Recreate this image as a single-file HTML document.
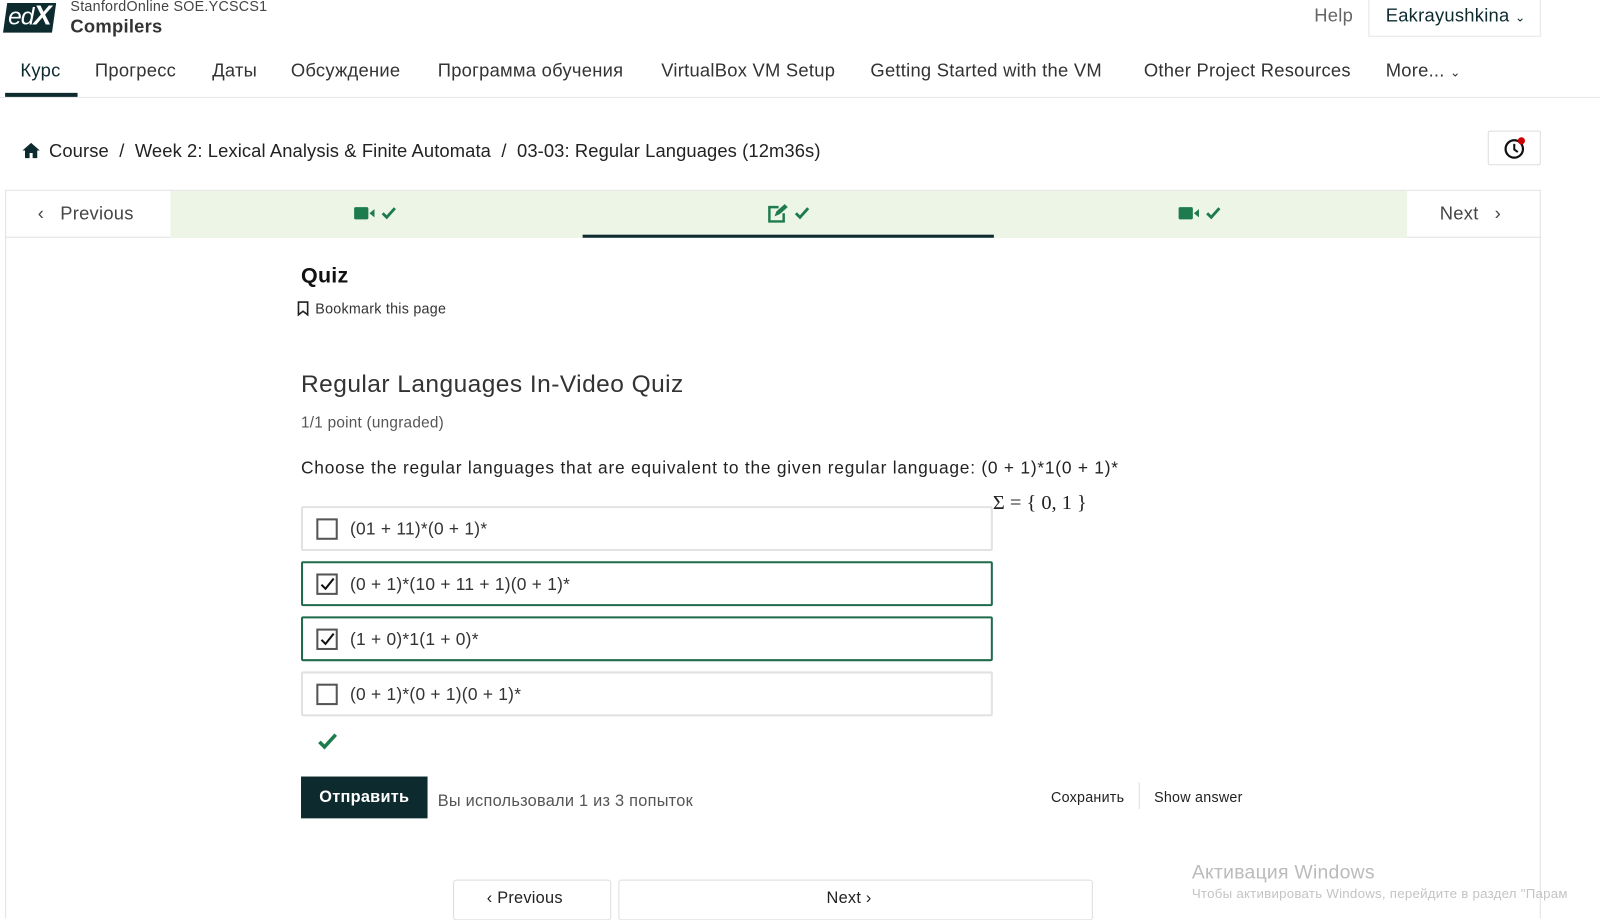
<!DOCTYPE html>
<html><head><meta charset="utf-8"><style>
*{box-sizing:border-box;margin:0;padding:0}
html,body{width:1600px;height:900px;overflow:hidden;background:#fff}
#w{position:absolute;left:0;top:0;width:1568px;height:882px;transform:scale(1.0204);transform-origin:0 0;font-family:"Liberation Sans",sans-serif;color:#222;letter-spacing:0.25px}
.a{position:absolute;white-space:nowrap}
.nav{font-size:18px;color:#333;top:59px}
.opt{position:absolute;left:295px;width:678px;height:44px;border:2px solid #e2e2e2;border-radius:2px}
.opt.s{border-color:#1f6b4c}
.cb{position:absolute;left:13px;top:10px;width:21px;height:21px;border:2px solid #555;background:#fff}
.opt span{position:absolute;left:46px;top:11px;font-size:17px;color:#333}
.tab{position:absolute;top:187px;height:46px;background:#edf5e6}
</style></head><body><div id="w">
<div class="a" style="left:5px;top:3px;width:48px;height:29px;background:#0d2b2f;transform:skewX(-8deg)"></div>
<div class="a" style="left:8px;top:0px;font-size:24px;font-style:italic;color:#fff;letter-spacing:-1px">ed<b style="font-size:27px">X</b></div>
<div class="a" style="left:69px;top:-2px;font-size:14px;color:#444">StanfordOnline SOE.YCSCS1</div>
<div class="a" style="left:69px;top:16px;font-size:18px;font-weight:bold;color:#333">Compilers</div>
<div class="a" style="left:1288px;top:5px;font-size:18px;color:#666">Help</div>
<div class="a" style="left:1341px;top:-1px;width:169px;height:37px;border:1px solid #e5e5e5"></div>
<div class="a" style="left:1358px;top:5px;font-size:18px;color:#0d2b2f">Eakrayushkina <span style="font-size:12px">⌄</span></div>
<div class="a nav" style="left:20px;color:#0d2b2f">Курс</div>
<div class="a" style="left:5px;top:91px;width:71px;height:4px;background:#0d2b2f"></div>
<div class="a nav" style="left:93px">Прогресс</div>
<div class="a nav" style="left:208px">Даты</div>
<div class="a nav" style="left:285px">Обсуждение</div>
<div class="a nav" style="left:429px">Программа обучения</div>
<div class="a nav" style="left:648px">VirtualBox VM Setup</div>
<div class="a nav" style="left:853px">Getting Started with the VM</div>
<div class="a nav" style="left:1121px">Other Project Resources</div>
<div class="a nav" style="left:1358px">More... <span style="font-size:12px">⌄</span></div>
<div class="a" style="left:0;top:95px;width:1600px;height:1px;background:#e8e8e8"></div>
<svg class="a" style="left:21px;top:139px" width="19" height="17" viewBox="0 0 19 17"><path d="M9.5 1L1 8.5h2.5V16h4.5v-5h3v5h4.5V8.5H18z" fill="#0d2b2f"/></svg>
<div class="a" style="left:48px;top:138px;font-size:18px;color:#222;letter-spacing:0.1px">Course &nbsp;/ &nbsp;Week 2: Lexical Analysis &amp; Finite Automata &nbsp;/ &nbsp;03-03: Regular Languages (12m36s)</div>
<div class="a" style="left:1458px;top:128px;width:52px;height:34px;border:1px solid #ddd;border-radius:2px"></div>
<svg class="a" style="left:1472px;top:133px" width="26" height="26" viewBox="0 0 26 26"><circle cx="12" cy="13" r="8.5" fill="none" stroke="#111" stroke-width="2.2"/><path d="M12 8v5.5l3.5 2.5" fill="none" stroke="#111" stroke-width="2"/><circle cx="19" cy="5" r="3.5" fill="#c00"/></svg>
<div class="a" style="left:5px;top:186px;width:1505px;height:714px;border:1px solid #e2e2e2;border-bottom:none"></div>
<div class="a" style="left:5px;top:232px;width:1505px;height:1px;background:#e2e2e2"></div>
<div class="tab" style="left:167px;width:404px"></div>
<div class="tab" style="left:571px;width:403px"></div>
<div class="tab" style="left:974px;width:405px"></div>
<div class="a" style="left:571px;top:230px;width:403px;height:3px;background:#0d2b2f"></div>
<div class="a" style="left:37px;top:199px;font-size:18px;color:#454545">‹ &nbsp;&nbsp;Previous</div>
<div class="a" style="left:1411px;top:199px;font-size:18px;color:#454545">Next &nbsp;&nbsp;›</div>
<svg class="a" style="left:347px;top:201px" width="46" height="16" viewBox="0 0 46 16"><rect x="0" y="2" width="14" height="12" rx="1.5" fill="#1e7b4e"/><path d="M15 8l5-4v8z" fill="#1e7b4e"/><path d="M28 8l4 4 8-9" fill="none" stroke="#1e7b4e" stroke-width="2.8"/></svg>
<svg class="a" style="left:751px;top:199px" width="46" height="20" viewBox="0 0 46 20"><path d="M12 4H3v14h14v-8" fill="none" stroke="#1e7b4e" stroke-width="2.4"/><path d="M8 13l2-5 8-7 3 3-8 7z" fill="#1e7b4e"/><path d="M29 10l4 4 8-9" fill="none" stroke="#1e7b4e" stroke-width="2.8"/></svg>
<svg class="a" style="left:1155px;top:201px" width="46" height="16" viewBox="0 0 46 16"><rect x="0" y="2" width="14" height="12" rx="1.5" fill="#1e7b4e"/><path d="M15 8l5-4v8z" fill="#1e7b4e"/><path d="M28 8l4 4 8-9" fill="none" stroke="#1e7b4e" stroke-width="2.8"/></svg>
<div class="a" style="left:295px;top:259px;font-size:21px;font-weight:bold;color:#111">Quiz</div>
<svg class="a" style="left:291px;top:295px" width="12" height="15" viewBox="0 0 12 15"><path d="M1.5 1h9v12.5L6 10l-4.5 3.5z" fill="none" stroke="#222" stroke-width="1.6"/></svg>
<div class="a" style="left:309px;top:294px;font-size:14px;color:#333">Bookmark this page</div>
<div class="a" style="left:295px;top:363px;font-size:24px;color:#333;letter-spacing:0.45px">Regular Languages In-Video Quiz</div>
<div class="a" style="left:295px;top:406px;font-size:15px;color:#555">1/1 point (ungraded)</div>
<div class="a" style="left:295px;top:449px;font-size:17px;color:#222;letter-spacing:0.75px">Choose the regular languages that are equivalent to the given regular language: (0 + 1)*1(0 + 1)*</div>
<div class="a" style="left:973px;top:482px;font-size:20px;font-family:'Liberation Serif',serif;color:#222;letter-spacing:0">Σ = { 0, 1 }</div>
<div class="opt" style="top:496px"><div class="cb"></div><span>(01 + 11)*(0 + 1)*</span></div>
<div class="opt s" style="top:550px"><div class="cb"><svg width="17" height="17" viewBox="0 0 17 17" style="position:absolute;left:0;top:0"><path d="M3 9l4 4 8-10" fill="none" stroke="#111" stroke-width="2"/></svg></div><span>(0 + 1)*(10 + 11 + 1)(0 + 1)*</span></div>
<div class="opt s" style="top:604px"><div class="cb"><svg width="17" height="17" viewBox="0 0 17 17" style="position:absolute;left:0;top:0"><path d="M3 9l4 4 8-10" fill="none" stroke="#111" stroke-width="2"/></svg></div><span>(1 + 0)*1(1 + 0)*</span></div>
<div class="opt" style="top:658px"><div class="cb"></div><span>(0 + 1)*(0 + 1)(0 + 1)*</span></div>
<svg class="a" style="left:311px;top:718px" width="20" height="17" viewBox="0 0 20 17"><path d="M2 9l5 5L18 2" fill="none" stroke="#1e7b4e" stroke-width="3.5"/></svg>
<div class="a" style="left:295px;top:761px;width:124px;height:41px;background:#0d2b2f;color:#fff;font-size:16px;font-weight:bold;text-align:center;line-height:41px">Отправить</div>
<div class="a" style="left:429px;top:777px;font-size:16px;color:#555">Вы использовали 1 из 3 попыток</div>
<div class="a" style="left:1030px;top:773px;font-size:14px;color:#222">Сохранить</div>
<div class="a" style="left:1116px;top:767px;width:1px;height:26px;background:#ddd"></div>
<div class="a" style="left:1131px;top:773px;font-size:14px;color:#222">Show answer</div>
<div class="a" style="left:444px;top:862px;width:155px;height:40px;border:1px solid #ddd;border-radius:3px"></div>
<div class="a" style="left:606px;top:862px;width:465px;height:40px;border:1px solid #ddd;border-radius:3px"></div>
<div class="a" style="left:477px;top:872px;font-size:16px;color:#222">‹ Previous</div>
<div class="a" style="left:810px;top:872px;font-size:16px;color:#222">Next ›</div>
<div class="a" style="left:1168px;top:845px;font-size:19px;color:#bbb">Активация Windows</div>
<div class="a" style="left:1168px;top:868px;font-size:13px;color:#c4c4c4">Чтобы активировать Windows, перейдите в раздел "Парам</div>
</div></body></html>
